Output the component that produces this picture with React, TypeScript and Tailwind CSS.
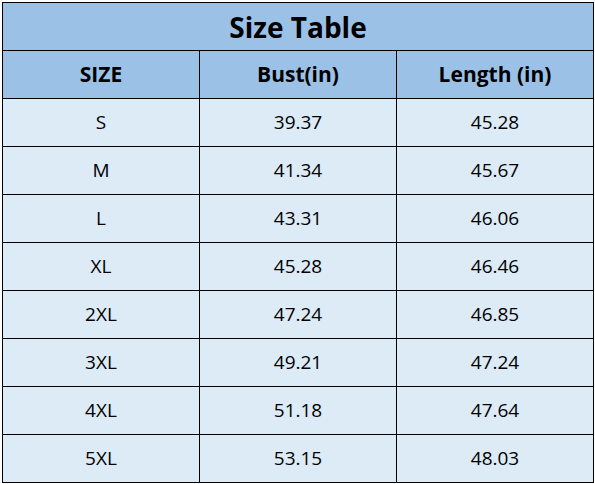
const rows: [string, string, string][] = [
  ["S", "39.37", "45.28"],
  ["M", "41.34", "45.67"],
  ["L", "43.31", "46.06"],
  ["XL", "45.28", "46.46"],
  ["2XL", "47.24", "46.85"],
  ["3XL", "49.21", "47.24"],
  ["4XL", "51.18", "47.64"],
  ["5XL", "53.15", "48.03"],
];

const headers = ["SIZE", "Bust(in)", "Length (in)"];

export default function App() {
  return (
    <div className="h-[484px] w-[595px] bg-white pl-[2px] pt-[2px] text-black" style={{ fontFamily: '"Open Sans", "Noto Sans", sans-serif' }}>
      <div className="grid w-[592px] grid-cols-[197px_197px_197px] border-l border-t border-black">
        <div className="col-span-3 flex h-[48px] items-center justify-center border-b border-r border-black bg-[#9bc2e6] text-[28px] font-bold">
          Size Table
        </div>
        {headers.map((h) => (
          <div key={h} className="flex h-[48px] items-center justify-center border-b border-r border-black bg-[#9bc2e6] text-[21px] font-bold">
            {h}
          </div>
        ))}
        {rows.map((row) =>
          row.map((cell, i) => (
            <div key={row[0] + i} className="flex h-[48px] items-center justify-center border-b border-r border-black bg-[#ddebf7] text-[19px]">
              {cell}
            </div>
          )),
        )}
      </div>
    </div>
  );
}
